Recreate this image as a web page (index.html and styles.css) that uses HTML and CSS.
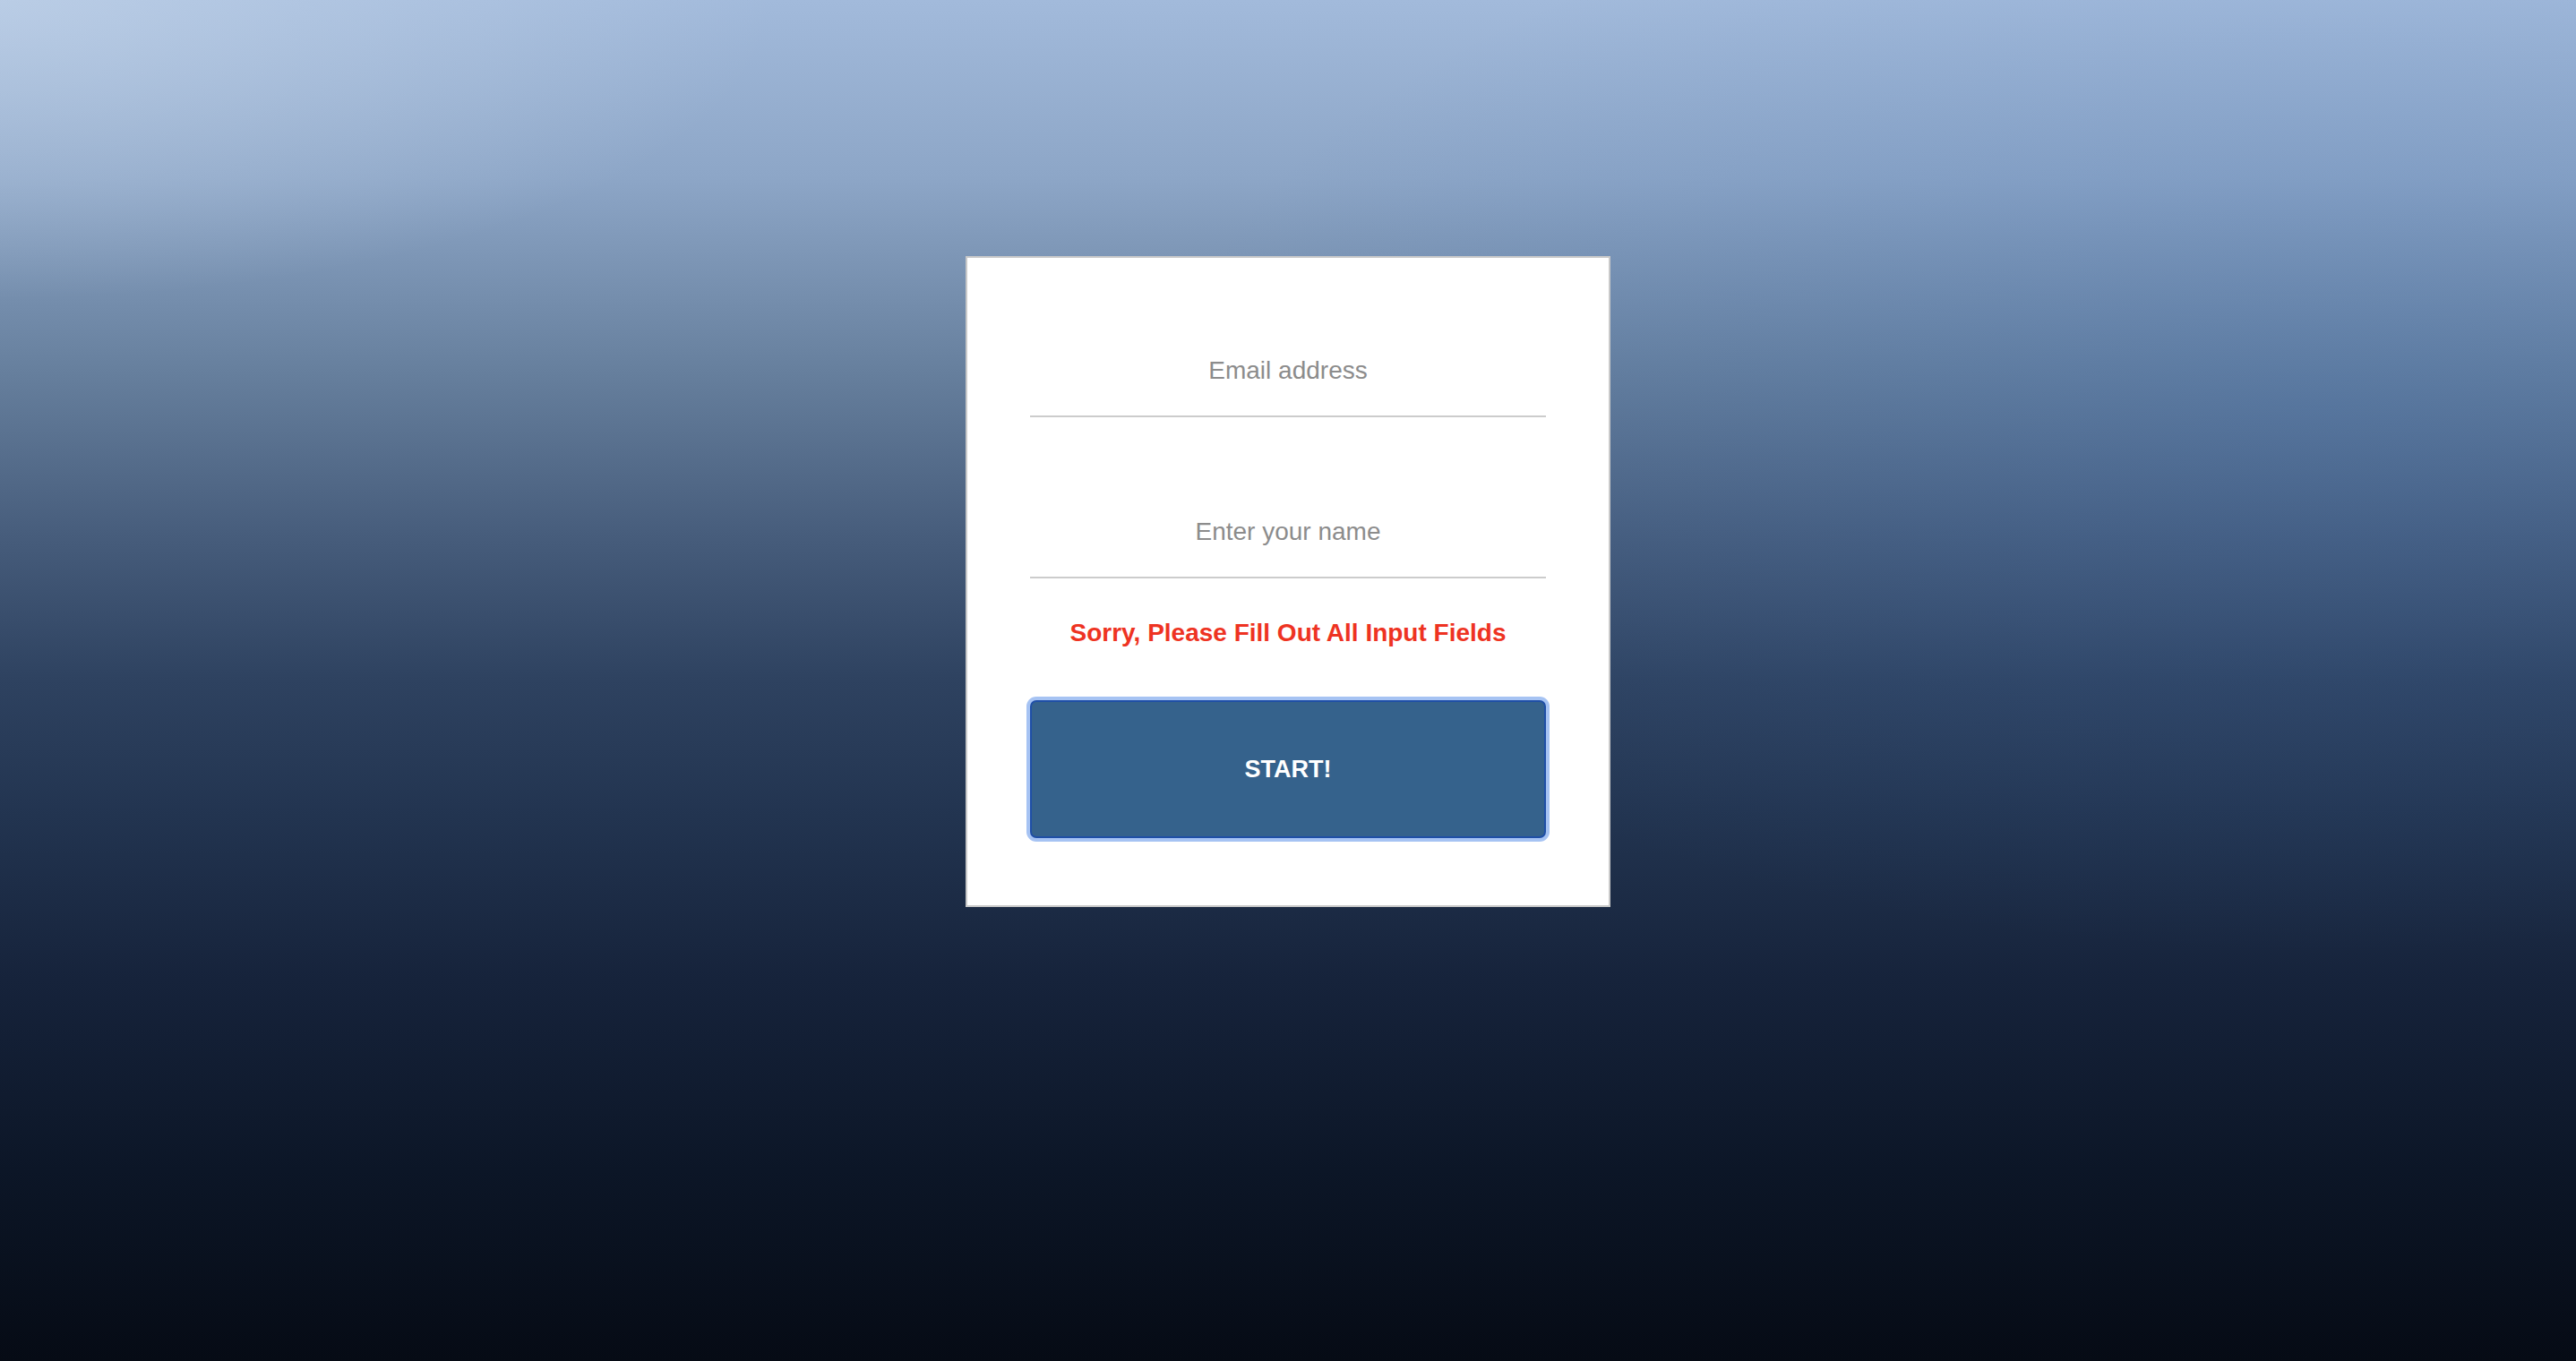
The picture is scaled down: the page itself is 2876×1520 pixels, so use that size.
FILE: index.html
```html
<!DOCTYPE html>
<html lang="en">
<head>
<meta charset="utf-8">
<title>Start</title>
<link rel="stylesheet" href="styles.css">
</head>
<body>
<main class="page">
  <form class="card" onsubmit="return false;">
    <input class="field" type="email" placeholder="Email address">
    <input class="field field-name" type="text" placeholder="Enter your name">
    <p class="error">Sorry, Please Fill Out All Input Fields</p>
    <button class="start" type="button">START!</button>
  </form>
</main>
</body>
</html>
```

FILE: styles.css
```css
html, body {
  margin: 0;
  padding: 0;
  height: 100%;
}

body {
  font-family: "Liberation Sans", Arial, Helvetica, sans-serif;
  background:
    radial-gradient(ellipse 30% 22% at 0% 0%, rgba(205, 220, 238, 0.55), rgba(205, 220, 238, 0)),
    radial-gradient(ellipse 45% 40% at 90% 30%, rgba(60, 110, 180, 0.25), rgba(60, 110, 180, 0)),
    linear-gradient(180deg,
      #a2badb 0%,
      #8da6c7 13%,
      #67809e 27%,
      #455b7a 40%,
      #2e4260 50%,
      #223450 60%,
      #16233b 72%,
      #0c1627 86%,
      #060b15 100%);
  overflow: hidden;
}

.page {
  display: flex;
  justify-content: center;
  align-items: flex-start;
  padding-top: 286px;
  box-sizing: border-box;
  height: 100%;
}

.card {
  width: 720px;
  box-sizing: border-box;
  background: #ffffff;
  border: 2px solid #c9c9c9;
  padding: 76px 70px 75px;
  display: flex;
  flex-direction: column;
}

.field {
  display: block;
  width: 100%;
  box-sizing: border-box;
  margin: 0;
  padding: 34px 0;
  border: none;
  border-bottom: 2px solid #cccccc;
  font-family: "Liberation Sans", Arial, Helvetica, sans-serif;
  font-size: 28px;
  line-height: 32px;
  height: 102px;
  text-align: center;
  color: #333333;
  background: transparent;
  outline: none;
}

.field::placeholder {
  color: #8c8c8c;
  opacity: 1;
}

.field-name {
  margin-top: 78px;
}

.error {
  margin: 45px 0 0;
  font-size: 28px;
  line-height: 32px;
  font-weight: bold;
  color: #ee3322;
  text-align: center;
}

.start {
  margin-top: 59px;
  height: 154px;
  width: 100%;
  box-sizing: border-box;
  background: #35628c;
  border: 2px solid #1f4fa6;
  border-radius: 7px;
  box-shadow: 0 0 0 4px #a6c3f3;
  color: #ffffff;
  font-family: "Liberation Sans", Arial, Helvetica, sans-serif;
  font-size: 27px;
  font-weight: bold;
  display: flex;
  align-items: center;
  justify-content: center;
  padding: 0;
  cursor: pointer;
}
```
